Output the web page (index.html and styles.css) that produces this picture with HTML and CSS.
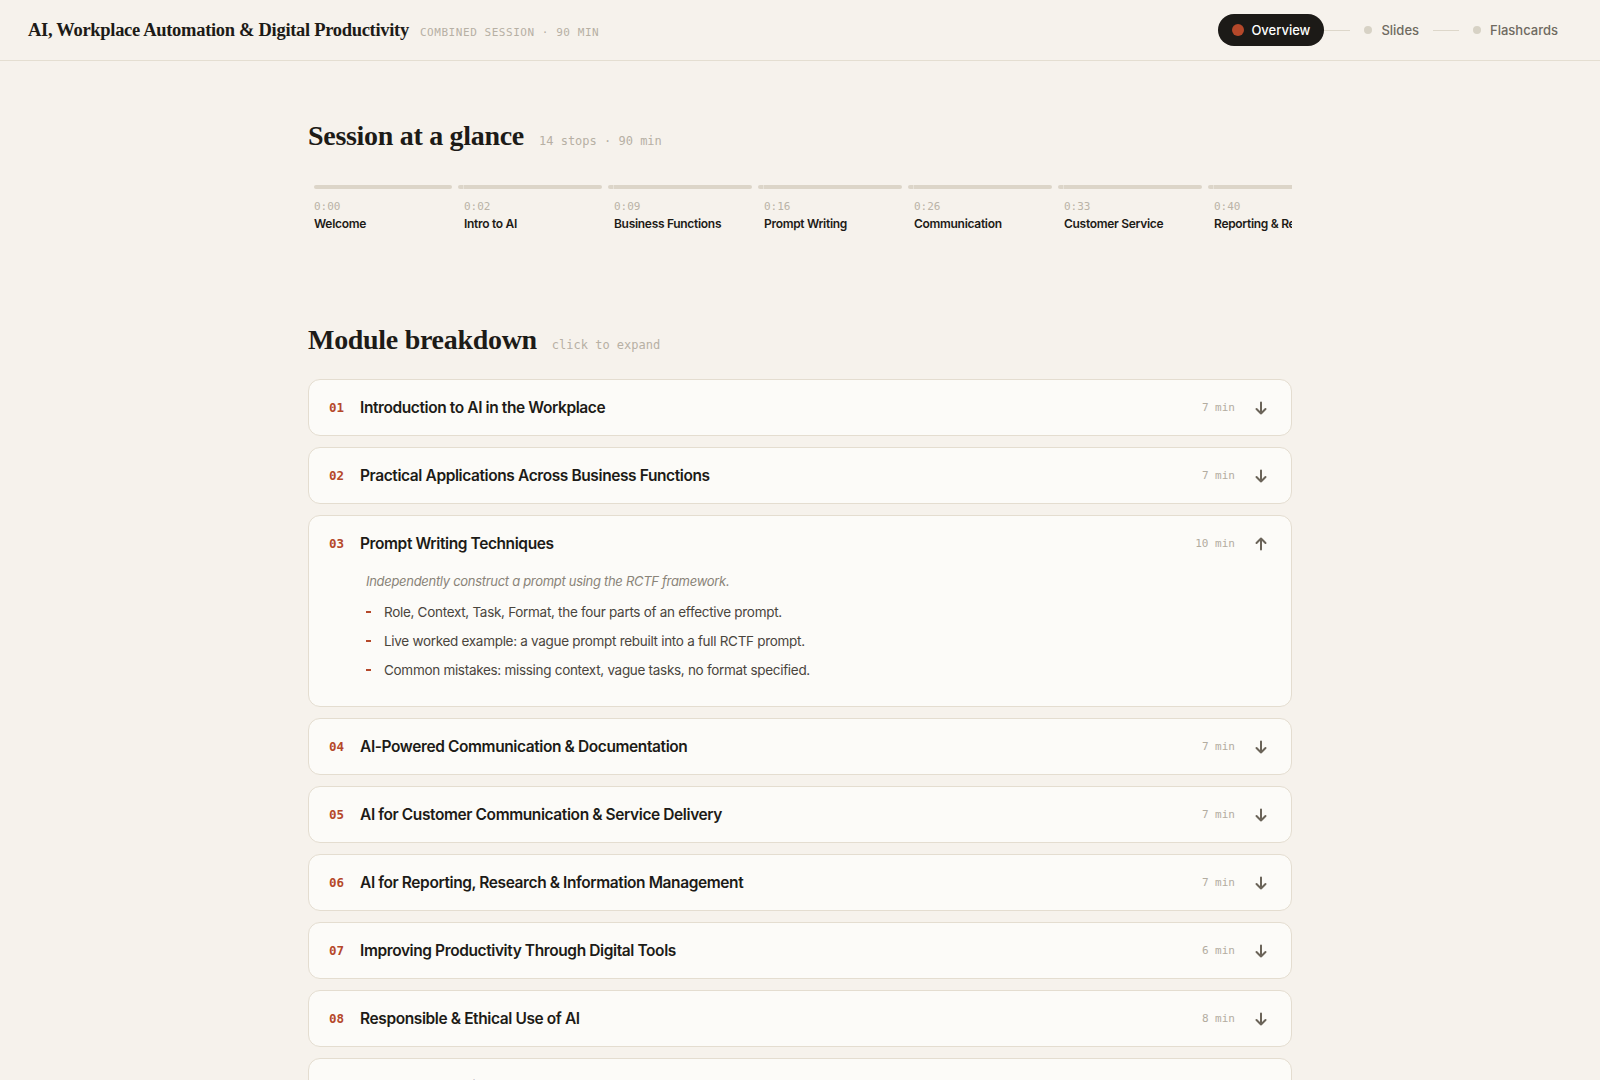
FILE: index.html
```html
<!DOCTYPE html>
<html lang="en">
<head>
  <meta charset="UTF-8">
  <meta name="viewport" content="width=device-width, initial-scale=1.0">
  <title>Session Overview</title>
  <link rel="stylesheet" href="styles.css">
</head>
<body>

  <header class="topbar">
    <div class="brand">
      <h1 class="brand-title">AI, Workplace Automation &amp; Digital Productivity</h1>
      <span class="brand-meta">Combined session · 90 min</span>
    </div>
    <nav class="steps">
      <a class="step active" href="#"><span class="step-dot"></span>Overview</a>
      <span class="step-line"></span>
      <a class="step" href="#"><span class="step-dot"></span>Slides</a>
      <span class="step-line"></span>
      <a class="step" href="#"><span class="step-dot"></span>Flashcards</a>
    </nav>
  </header>

  <main class="page">

    <section class="glance">
      <div class="section-head">
        <h2>Session at a glance</h2>
        <span class="section-note">14 stops · 90 min</span>
      </div>
      <div class="timeline">
        <div class="track">
          <div class="stop"><div class="stop-bar"></div><span class="stop-time">0:00</span><span class="stop-name">Welcome</span></div>
          <div class="stop"><div class="stop-bar"></div><span class="stop-time">0:02</span><span class="stop-name">Intro to AI</span></div>
          <div class="stop"><div class="stop-bar"></div><span class="stop-time">0:09</span><span class="stop-name">Business Functions</span></div>
          <div class="stop"><div class="stop-bar"></div><span class="stop-time">0:16</span><span class="stop-name">Prompt Writing</span></div>
          <div class="stop"><div class="stop-bar"></div><span class="stop-time">0:26</span><span class="stop-name">Communication</span></div>
          <div class="stop"><div class="stop-bar"></div><span class="stop-time">0:33</span><span class="stop-name">Customer Service</span></div>
          <div class="stop"><div class="stop-bar"></div><span class="stop-time">0:40</span><span class="stop-name">Reporting &amp; Research</span></div>
          <div class="stop"><div class="stop-bar"></div><span class="stop-time">0:47</span><span class="stop-name">Digital Tools</span></div>
          <div class="stop"><div class="stop-bar"></div><span class="stop-time">0:53</span><span class="stop-name">Responsible AI</span></div>
          <div class="stop"><div class="stop-bar"></div><span class="stop-time">1:01</span><span class="stop-name">Automation</span></div>
          <div class="stop"><div class="stop-bar"></div><span class="stop-time">1:09</span><span class="stop-name">Workflows</span></div>
          <div class="stop"><div class="stop-bar"></div><span class="stop-time">1:16</span><span class="stop-name">Hands-on Practice</span></div>
          <div class="stop"><div class="stop-bar"></div><span class="stop-time">1:24</span><span class="stop-name">Recap</span></div>
          <div class="stop"><div class="stop-bar"></div><span class="stop-time">1:28</span><span class="stop-name">Close</span></div>
        </div>
      </div>
    </section>

    <section class="modules">
      <div class="section-head">
        <h2>Module breakdown</h2>
        <span class="section-note">click to expand</span>
      </div>

      <div class="module-list" id="moduleList">
        <div class="module">
          <div class="module-head" onclick="toggleModule(this)">
            <span class="module-num">01</span>
            <span class="module-title">Introduction to AI in the Workplace</span>
            <span class="module-time">7 min</span>
            <svg class="module-arrow" viewBox="0 0 16 16"><path d="M8 2.5v11M3.5 9 8 13.5 12.5 9"/></svg>
          </div>
          <div class="module-body">
            <p class="module-goal">Explain what AI is and where it already shows up in everyday work.</p>
            <ul class="module-points">
              <li>What AI is, and what it is not.</li>
              <li>Everyday tools that already use AI.</li>
            </ul>
          </div>
        </div>

        <div class="module">
          <div class="module-head" onclick="toggleModule(this)">
            <span class="module-num">02</span>
            <span class="module-title">Practical Applications Across Business Functions</span>
            <span class="module-time">7 min</span>
            <svg class="module-arrow" viewBox="0 0 16 16"><path d="M8 2.5v11M3.5 9 8 13.5 12.5 9"/></svg>
          </div>
          <div class="module-body">
            <p class="module-goal">Match common business tasks to suitable AI tools.</p>
            <ul class="module-points">
              <li>Admin, HR, finance and sales use cases.</li>
              <li>Choosing the right tool for the job.</li>
            </ul>
          </div>
        </div>

        <div class="module open">
          <div class="module-head" onclick="toggleModule(this)">
            <span class="module-num">03</span>
            <span class="module-title">Prompt Writing Techniques</span>
            <span class="module-time">10 min</span>
            <svg class="module-arrow" viewBox="0 0 16 16"><path d="M8 2.5v11M3.5 9 8 13.5 12.5 9"/></svg>
          </div>
          <div class="module-body">
            <p class="module-goal">Independently construct a prompt using the RCTF framework.</p>
            <ul class="module-points">
              <li>Role, Context, Task, Format, the four parts of an effective prompt.</li>
              <li>Live worked example: a vague prompt rebuilt into a full RCTF prompt.</li>
              <li>Common mistakes: missing context, vague tasks, no format specified.</li>
            </ul>
          </div>
        </div>

        <div class="module">
          <div class="module-head" onclick="toggleModule(this)">
            <span class="module-num">04</span>
            <span class="module-title">AI-Powered Communication &amp; Documentation</span>
            <span class="module-time">7 min</span>
            <svg class="module-arrow" viewBox="0 0 16 16"><path d="M8 2.5v11M3.5 9 8 13.5 12.5 9"/></svg>
          </div>
          <div class="module-body">
            <p class="module-goal">Draft and refine emails, reports and notes with AI.</p>
            <ul class="module-points">
              <li>Drafting, summarising and rewriting for tone.</li>
            </ul>
          </div>
        </div>

        <div class="module">
          <div class="module-head" onclick="toggleModule(this)">
            <span class="module-num">05</span>
            <span class="module-title">AI for Customer Communication &amp; Service Delivery</span>
            <span class="module-time">7 min</span>
            <svg class="module-arrow" viewBox="0 0 16 16"><path d="M8 2.5v11M3.5 9 8 13.5 12.5 9"/></svg>
          </div>
          <div class="module-body">
            <p class="module-goal">Use AI to respond to customers faster and more consistently.</p>
            <ul class="module-points">
              <li>Reply templates, chat assistants and FAQs.</li>
            </ul>
          </div>
        </div>

        <div class="module">
          <div class="module-head" onclick="toggleModule(this)">
            <span class="module-num">06</span>
            <span class="module-title">AI for Reporting, Research &amp; Information Management</span>
            <span class="module-time">7 min</span>
            <svg class="module-arrow" viewBox="0 0 16 16"><path d="M8 2.5v11M3.5 9 8 13.5 12.5 9"/></svg>
          </div>
          <div class="module-body">
            <p class="module-goal">Gather, summarise and organise information with AI.</p>
            <ul class="module-points">
              <li>Research summaries and report outlines.</li>
            </ul>
          </div>
        </div>

        <div class="module">
          <div class="module-head" onclick="toggleModule(this)">
            <span class="module-num">07</span>
            <span class="module-title">Improving Productivity Through Digital Tools</span>
            <span class="module-time">6 min</span>
            <svg class="module-arrow" viewBox="0 0 16 16"><path d="M8 2.5v11M3.5 9 8 13.5 12.5 9"/></svg>
          </div>
          <div class="module-body">
            <p class="module-goal">Set up simple automations that save time every week.</p>
            <ul class="module-points">
              <li>Calendars, task lists and shared documents.</li>
            </ul>
          </div>
        </div>

        <div class="module">
          <div class="module-head" onclick="toggleModule(this)">
            <span class="module-num">08</span>
            <span class="module-title">Responsible &amp; Ethical Use of AI</span>
            <span class="module-time">8 min</span>
            <svg class="module-arrow" viewBox="0 0 16 16"><path d="M8 2.5v11M3.5 9 8 13.5 12.5 9"/></svg>
          </div>
          <div class="module-body">
            <p class="module-goal">Recognise the risks of AI and use it safely at work.</p>
            <ul class="module-points">
              <li>Privacy, bias and checking the output.</li>
            </ul>
          </div>
        </div>

        <div class="module">
          <div class="module-head" onclick="toggleModule(this)">
            <span class="module-num">09</span>
            <span class="module-title">Hands-on Practice &amp; Recap</span>
            <span class="module-time">10 min</span>
            <svg class="module-arrow" viewBox="0 0 16 16"><path d="M8 2.5v11M3.5 9 8 13.5 12.5 9"/></svg>
          </div>
          <div class="module-body">
            <p class="module-goal">Apply the session to a real task from your own role.</p>
            <ul class="module-points">
              <li>Guided exercise and group review.</li>
            </ul>
          </div>
        </div>
      </div>
    </section>

  </main>

  <script>
    function toggleModule(head) {
      head.parentElement.classList.toggle('open');
    }
  </script>
</body>
</html>
```

FILE: styles.css
```css
body {
  margin: 0;
  background: #f6f2ec;
  color: #1d1b17;
  font-family: Inter, "Noto Sans", sans-serif;
}

/* top bar */

.topbar {
  height: 60px;
  padding: 0 28px;
  display: flex;
  align-items: center;
  justify-content: space-between;
  border-bottom: 1px solid #e4ded1;
}

.brand {
  display: flex;
  align-items: baseline;
  gap: 11px;
}

.brand-title {
  margin: 0;
  font-family: "Liberation Serif", serif;
  font-size: 18.5px;
  font-weight: 700;
  letter-spacing: -0.3px;
  color: #1d1b17;
}

.brand-meta {
  font-family: "DejaVu Sans Mono", monospace;
  font-size: 11px;
  letter-spacing: 0.05em;
  text-transform: uppercase;
  color: #b7b0a4;
}

.steps {
  display: flex;
  align-items: center;
}

.step {
  height: 32px;
  padding: 0 14px;
  display: flex;
  align-items: center;
  gap: 9px;
  border-radius: 16px;
  font-size: 13px;
  font-weight: 500;
  color: #6f6a60;
  text-decoration: none;
}

.step-dot {
  width: 8px;
  height: 8px;
  border-radius: 50%;
  background: #d7d2c5;
}

.step.active {
  background: #1c1a17;
  color: #fff;
  gap: 7px;
}

.step.active .step-dot {
  width: 12px;
  height: 12px;
  background: #b5482a;
}

.step-line {
  width: 26px;
  height: 1px;
  background: #ddd7ca;
}

/* page */

.page {
  width: 984px;
  margin: 0 auto;
  padding-top: 58px;
}

.section-head {
  display: flex;
  align-items: baseline;
  gap: 15px;
}

.section-head h2 {
  margin: 0;
  font-family: "Liberation Serif", serif;
  font-size: 28px;
  font-weight: 700;
  letter-spacing: -0.3px;
  line-height: 34px;
}

.section-note {
  font-family: "DejaVu Sans Mono", monospace;
  font-size: 12px;
  color: #b7b0a4;
}

/* timeline */

.timeline {
  margin-top: 32px;
  overflow: hidden;
}

.track {
  display: flex;
  gap: 6px;
}

.stop {
  flex: 0 0 144px;
  display: flex;
  flex-direction: column;
}

.stop-bar {
  height: 4px;
  border-radius: 2px;
  background: linear-gradient(to right, #dcd5c8 5px, #e8e3d9 5px, #e8e3d9 6px, #dcd5c8 6px);
}

.stop:first-child .stop-bar {
  margin-left: 6px;
  background: #dcd5c8;
}

.stop-time {
  margin-top: 11px;
  padding-left: 6px;
  font-family: "DejaVu Sans Mono", monospace;
  font-size: 11px;
  color: #bab3a7;
}

.stop-name {
  margin-top: 3px;
  padding-left: 6px;
  font-size: 12px;
  font-weight: 600;
  letter-spacing: -0.3px;
  color: #1d1b17;
  white-space: nowrap;
}

/* modules */

.modules {
  margin-top: 92px;
}

.module-list {
  margin-top: 22px;
  display: flex;
  flex-direction: column;
  gap: 11px;
}

.module {
  background: #fcfbf8;
  border: 1px solid #e4ddd0;
  border-radius: 12px;
}

.module-head {
  height: 55px;
  padding: 0 22px 0 20px;
  display: flex;
  align-items: center;
  cursor: pointer;
}

.module-num {
  width: 31px;
  font-family: "DejaVu Sans Mono", monospace;
  font-size: 12.5px;
  font-weight: 700;
  color: #b5482a;
}

.module-title {
  flex: 1;
  font-size: 15.5px;
  font-weight: 600;
  letter-spacing: -0.4px;
  color: #1d1b17;
}

.module-time {
  font-family: "DejaVu Sans Mono", monospace;
  font-size: 11px;
  color: #b3aca0;
  margin-right: 18px;
}

.module-arrow {
  width: 16px;
  height: 16px;
  fill: none;
  stroke: #6b6459;
  stroke-width: 2;
  stroke-linecap: round;
  stroke-linejoin: round;
}

.module-body {
  display: none;
  padding: 0 24px 26px 57px;
}

.module.open .module-body {
  display: block;
}

.module.open .module-arrow {
  transform: rotate(180deg);
}

.module-goal {
  margin: 0;
  font-size: 13px;
  line-height: 20px;
  font-style: italic;
  letter-spacing: -0.3px;
  color: #8a8478;
}

.module-points {
  list-style: none;
  margin: 11px 0 0;
  padding: 0;
  display: flex;
  flex-direction: column;
  gap: 9px;
}

.module-points li {
  position: relative;
  padding-left: 18px;
  font-size: 13.5px;
  line-height: 20px;
  letter-spacing: -0.3px;
  color: #4a453d;
}

.module-points li::before {
  content: "";
  position: absolute;
  left: 0;
  top: 9px;
  width: 5px;
  height: 1.5px;
  background: #b5482a;
}
```
